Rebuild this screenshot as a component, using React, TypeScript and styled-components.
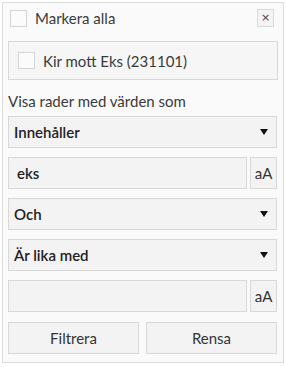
import styled, { createGlobalStyle } from "styled-components"

const GlobalStyle = createGlobalStyle`
  body {
    margin: 0;
    background: #ffffff;
    font-family: Lato, "Open Sans", sans-serif;
  }
`

const Panel = styled.div`
  box-sizing: border-box;
  margin: 2px 0 0 2px;
  width: 282px;
  height: 361px;
  border: 1px solid #dcdcdc;
  background: #fafafa;
  padding: 1px 5px 0 5px;
  display: flex;
  flex-direction: column;
  color: #333;
`

const Header = styled.div`
  display: flex;
  align-items: center;
  height: 28px;
  padding-left: 2px;
`

const Check = styled.span`
  box-sizing: border-box;
  width: 17px;
  height: 17px;
  border: 1px solid #d4d4d4;
  background: #fbfbfb;
  flex: none;
`

const CheckLabel = styled.span`
  font-size: 15px;
  margin-left: 8px;
  color: #3a3a3a;
  flex: 1;
`

const CloseBtn = styled.span`
  box-sizing: border-box;
  width: 17px;
  height: 18px;
  border: 1px solid #dadada;
  background: #f4f4f4;
  font-family: "DejaVu Sans", sans-serif;
  font-size: 11px;
  line-height: 15px;
  text-align: center;
  color: #444;
  margin-right: 4px;
`

const ItemBox = styled.div`
  box-sizing: border-box;
  margin-top: 9px;
  height: 39px;
  width: 270px;
  border: 1px solid #d8d8d8;
  background: #f6f6f6;
  display: flex;
  align-items: center;
  padding-left: 9px;
`

const Caption = styled.div`
  font-size: 15px;
  color: #3a3a3a;
  margin-top: 12px;
  height: 22px;
`

const Row = styled.div`
  display: flex;
  gap: 3px;
  margin-top: 9px;
  width: 269px;
  height: 32px;
  &:first-of-type {
    margin-top: 0;
  }
`

const Field = styled.div<{ $select?: boolean }>`
  box-sizing: border-box;
  flex: 1;
  height: 32px;
  border: 1px solid #d8d8d8;
  background: #f3f3f3;
  display: flex;
  align-items: center;
  padding: 0 0 0 ${(p) => (p.$select ? "5px" : "8px")};
  font-size: 15px;
  font-weight: 600;
  color: #222;
`

const FieldText = styled.span`
  flex: 1;
`

const Arrow = styled.span`
  width: 0;
  height: 0;
  border-left: 4px solid transparent;
  border-right: 4px solid transparent;
  border-top: 6px solid #111;
  margin-right: 8px;
`

const CaseBtn = styled.div`
  box-sizing: border-box;
  width: 27px;
  height: 32px;
  border: 1px solid #d8d8d8;
  background: #f3f3f3;
  font-size: 15px;
  color: #333;
  display: flex;
  align-items: center;
  justify-content: center;
`

const Fields = styled.div`
  display: flex;
  flex-direction: column;
  margin-top: 2px;
`

const Buttons = styled.div`
  display: grid;
  grid-template-columns: 131px 131px;
  gap: 7px;
  margin-top: 10px;
`

const Button = styled.div`
  box-sizing: border-box;
  height: 32px;
  border: 1px solid #d8d8d8;
  background: #f3f3f3;
  display: flex;
  align-items: center;
  justify-content: center;
  font-size: 15px;
  color: #333;
`

const App = () => {
  return (
    <>
      <GlobalStyle />
      <Panel>
        <Header>
          <Check />
          <CheckLabel>Markera alla</CheckLabel>
          <CloseBtn>×</CloseBtn>
        </Header>
        <ItemBox>
          <Check />
          <CheckLabel>Kir mott Eks (231101)</CheckLabel>
        </ItemBox>
        <Caption>Visa rader med värden som</Caption>
        <Fields>
          <Row>
            <Field $select>
              <FieldText>Innehåller</FieldText>
              <Arrow />
            </Field>
          </Row>
          <Row>
            <Field>
              <FieldText>eks</FieldText>
            </Field>
            <CaseBtn>aA</CaseBtn>
          </Row>
          <Row>
            <Field $select>
              <FieldText>Och</FieldText>
              <Arrow />
            </Field>
          </Row>
          <Row>
            <Field $select>
              <FieldText>Är lika med</FieldText>
              <Arrow />
            </Field>
          </Row>
          <Row>
            <Field />
            <CaseBtn>aA</CaseBtn>
          </Row>
        </Fields>
        <Buttons>
          <Button>Filtrera</Button>
          <Button>Rensa</Button>
        </Buttons>
      </Panel>
    </>
  )
}

export default App
